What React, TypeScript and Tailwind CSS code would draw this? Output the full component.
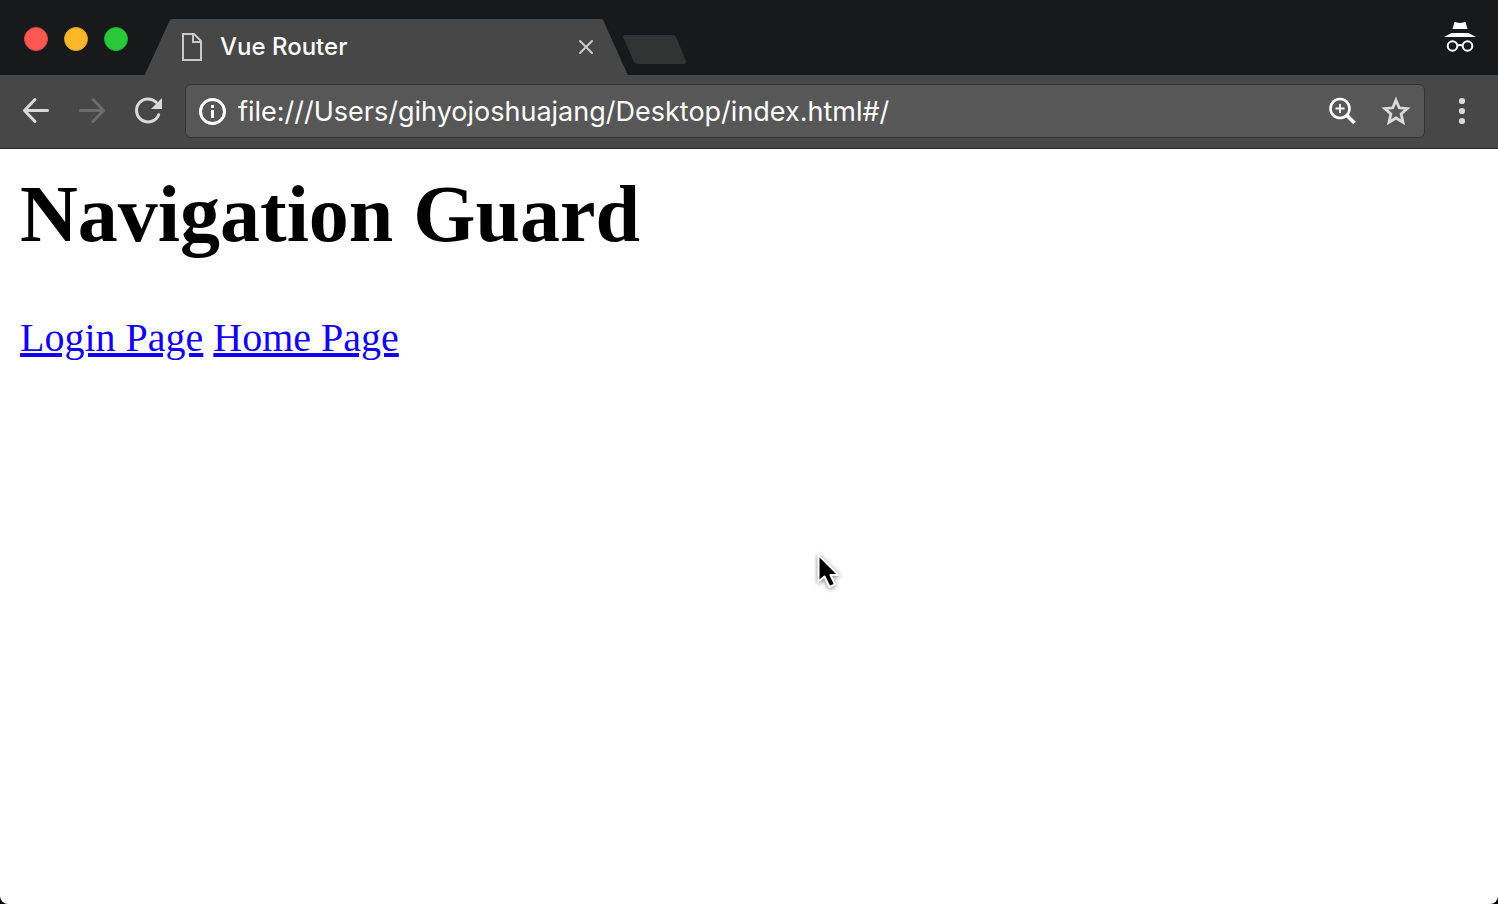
import { useState } from "react";

function TabStrip() {
  return (
    <header className="flex h-[75px] items-end bg-[#17191a] pr-[22px]">
      <div className="flex w-[145px] shrink-0 gap-4 self-start pt-[27px] pl-6">
        <button aria-label="Close window" className="size-6 rounded-full border border-[#e24640] bg-[#ff5952]" />
        <button aria-label="Minimize window" className="size-6 rounded-full border border-[#dfa023] bg-[#fdb72b]" />
        <button aria-label="Zoom window" className="size-6 rounded-full border border-[#1dae2c] bg-[#29c939]" />
      </div>

      <div className="flex h-14 w-[484px] shrink-0">
        <svg className="h-14 w-[27px] shrink-0 text-[#474747]" viewBox="0 0 27 56" fill="currentColor" aria-hidden="true">
          <path d="M-1 56 Q0 55 1 53 L24 3 Q25 0 27 0 V56 Z" />
        </svg>
        <div className="flex min-w-0 flex-1 items-center bg-[#474747] pr-2 pl-[10px]">
          <svg className="h-7 w-5 shrink-0" viewBox="0 0 20 28" fill="none" stroke="#c9c9c9" strokeWidth="2" aria-hidden="true">
            <path d="M1 1 H12 L19 8 V27 H1 Z" />
            <path d="M11 1 V9 H19" />
          </svg>
          <span className="min-w-0 flex-1 truncate pl-[18px] text-2xl font-medium text-white">Vue Router</span>
          <button aria-label="Close tab" className="shrink-0">
            <svg className="size-4" viewBox="0 0 16 16" fill="none" stroke="#cbcbcb" strokeWidth="2" strokeLinecap="round">
              <path d="M2 2 L14 14 M14 2 L2 14" />
            </svg>
          </button>
        </div>
        <svg className="h-14 w-[27px] shrink-0 text-[#474747]" viewBox="0 0 27 56" fill="currentColor" aria-hidden="true">
          <path d="M0 0 Q1 1 2 3 L24 52 Q25 56 27 56 H0 Z" />
        </svg>
      </div>

      <button aria-label="New tab" className="mb-[10px] -ml-[6px] shrink-0">
        <svg className="h-[30px] w-16" viewBox="0 0 64 30" fill="#323333">
          <path d="M2 0 H49 Q52 0 53 2 L63 26 Q64 29 61 29 H15 Q12 29 11 27 L0 2 Q0 0 2 0 Z" />
        </svg>
      </button>

      <svg className="mb-[22px] ml-auto h-8 w-8 shrink-0" viewBox="0 0 32 32" fill="white" role="img" aria-label="Incognito">
        <path d="M10.5 1.3 Q11 .8 12 1.2 Q16 2.8 20 1.2 Q21 .8 21.5 1.3 L23.5 8 H8.5 Z" />
        <path d="M0 16 L7.5 12 H24.5 L32 16 Z" />
        <g fill="none" stroke="white" strokeWidth="2">
          <circle cx="8.5" cy="25" r="4.8" />
          <circle cx="23.5" cy="25" r="4.8" />
          <path d="M13.2 24.5 Q16 23.3 18.8 24.5" />
        </g>
      </svg>
    </header>
  );
}

function Toolbar() {
  const [address, setAddress] = useState("file:///Users/gihyojoshuajang/Desktop/index.html#/");
  return (
    <div className="flex h-[74px] items-center border-b border-[#292929] bg-[#474747] pr-7 pb-px pl-[22px]">
      <div className="flex w-[163px] shrink-0 gap-7">
        <button aria-label="Back">
          <svg className="size-7" viewBox="0 0 28 28" fill="none" stroke="#dadada" strokeWidth="3" strokeLinecap="round" strokeLinejoin="round">
            <path d="M25.5 13.5 H2.5 M13 2.5 L2.5 13.5 L13 24.5" />
          </svg>
        </button>
        <button aria-label="Forward">
          <svg className="size-7" viewBox="0 0 28 28" fill="none" stroke="#6c6c6c" strokeWidth="3" strokeLinecap="round" strokeLinejoin="round">
            <path d="M2.5 13.5 H25.5 M15 2.5 L25.5 13.5 L15 24.5" />
          </svg>
        </button>
        <button aria-label="Reload">
          <svg className="size-7" viewBox="0 0 28 28" fill="none">
            <path d="M24.7 17.7 A11.5 11.5 0 1 1 22.2 5.3" stroke="#dadada" strokeWidth="3" strokeLinecap="round" />
            <path d="M28 1 V12 H17 Z" fill="#dadada" />
          </svg>
        </button>
      </div>

      <form
        className="flex h-[54px] min-w-0 flex-1 items-center rounded-md border border-[#333333] bg-[#575757] pr-[13px] pl-3"
        onSubmit={(event) => event.preventDefault()}
      >
        <button type="button" aria-label="Site information" className="shrink-0">
          <svg className="size-7" viewBox="0 0 28 28" fill="none">
            <circle cx="14.5" cy="14.5" r="12" stroke="white" strokeWidth="3" />
            <path d="M13 8 H16 V11 H13 Z M13 13 H16 V21 H13 Z" fill="white" />
          </svg>
        </button>
        <input
          aria-label="Address"
          value={address}
          onChange={(event) => setAddress(event.target.value)}
          spellCheck={false}
          className="h-10 min-w-0 flex-1 bg-transparent px-3 pt-[2px] text-[27px] text-white outline-none"
        />
        <div className="flex shrink-0 gap-6">
          <button type="button" aria-label="Zoom">
            <svg className="size-7" viewBox="0 0 28 28" fill="none" stroke="white">
              <circle cx="11" cy="11.5" r="9.5" strokeWidth="2.6" />
              <path d="M17.5 18 L25.5 26" strokeWidth="3.8" />
              <path d="M11 7 V16 M6.5 11.5 H15.5" strokeWidth="1.8" />
            </svg>
          </button>
          <button type="button" aria-label="Bookmark this page">
            <svg className="h-7 w-[30px] overflow-visible" viewBox="0 0 30 28" fill="none" stroke="#dadada" strokeWidth="2.8">
              <path d="M15 3.2 L18.2 10.8 L26.2 11.5 L20.1 16.9 L22 25.3 L15 21 L8 25.3 L9.9 16.9 L3.8 11.5 L11.8 10.8 Z" />
            </svg>
          </button>
        </div>
      </form>

      <button aria-label="Menu" className="ml-[29px] shrink-0">
        <svg className="h-7 w-4" viewBox="0 0 16 28" fill="#dadada">
          <circle cx="8" cy="4" r="3.1" />
          <circle cx="8" cy="14" r="3.1" />
          <circle cx="8" cy="24" r="3.1" />
        </svg>
      </button>
    </div>
  );
}

export default function App() {
  return (
    <div className="flex min-h-screen flex-col bg-black font-['Inter','Liberation_Sans',sans-serif]">
      <TabStrip />
      <Toolbar />
      <main className="relative flex-1 rounded-b-lg bg-white px-5 pt-[19px] font-['Liberation_Serif',serif]">
        <h1 className="text-[80px] leading-[92px] font-bold text-black">Navigation Guard</h1>
        <p className="mt-[55px] text-[40px] leading-[46px] text-[#1400f0]">
          <a href="#/login" className="underline">Login Page</a>{" "}
          <a href="#/" className="underline">Home Page</a>
        </p>
        <svg className="absolute top-[401px] left-[812px] h-11 w-8 drop-shadow-[0_1px_2px_rgba(0,0,0,0.5)]" viewBox="0 0 32 44" aria-hidden="true">
          <path
            d="M6.5 5 V31.5 L12.5 26.5 L17.5 37 L23 34.5 L18.5 25 H26.5 Z"
            fill="black"
            stroke="white"
            strokeWidth="2"
            strokeLinejoin="round"
          />
        </svg>
      </main>
    </div>
  );
}
